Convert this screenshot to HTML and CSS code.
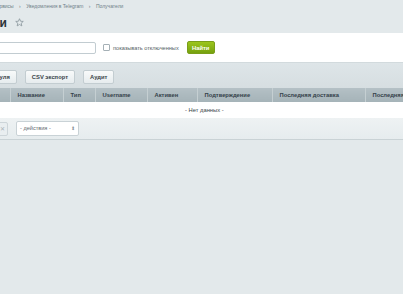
FILE: index.html
```html
<!DOCTYPE html>
<html lang="ru">
<head>
    <meta charset="UTF-8">
    <meta name="viewport" content="width=device-width, initial-scale=1.0">
    <title>Получатели</title>
    <link rel="stylesheet" href="styles.css">
</head>
<body>
    <div class="page">
        <div class="crumbs">
            <span class="crumb">Сервисы</span>
            <span class="sep">›</span>
            <span class="crumb">Уведомления в Telegram</span>
            <span class="sep">›</span>
            <span class="crumb">Получатели</span>
        </div>
        <div class="title-row">
            <h1>Получатели</h1>
            <svg class="star" viewBox="0 0 10 10" width="9" height="9">
                <path d="M5 0.8 L6.2 3.6 L9.2 3.8 L6.9 5.8 L7.6 8.8 L5 7.2 L2.4 8.8 L3.1 5.8 L0.8 3.8 L3.8 3.6 Z" fill="none" stroke="#8a969c" stroke-width="0.9" stroke-linejoin="round"/>
            </svg>
        </div>
        <div class="filter">
            <input class="search" type="text">
            <label class="check"><span class="box"></span>показывать отключенных</label>
            <button class="find">Найти</button>
        </div>
        <div class="toolbar">
            <button class="tbtn">Настройки модуля</button>
            <button class="tbtn">CSV экспорт</button>
            <button class="tbtn">Аудит</button>
        </div>
        <table class="grid">
            <thead>
                <tr>
                    <th class="c-check"></th>
                    <th class="c-id">ID</th>
                    <th class="c-name">Название</th>
                    <th class="c-type">Тип</th>
                    <th class="c-user">Username</th>
                    <th class="c-active">Активен</th>
                    <th class="c-conf">Подтверждение</th>
                    <th class="c-last">Последняя доставка</th>
                    <th class="c-last2">Последняя ошибка</th>
                </tr>
            </thead>
            <tbody>
                <tr>
                    <td class="empty" colspan="9">- Нет данных -</td>
                </tr>
            </tbody>
        </table>
        <div class="footer">
            <button class="del">✕</button>
            <div class="select">- действия -<span class="arrows">⬍</span></div>
        </div>
    </div>
</body>
</html>
```

FILE: styles.css
```css
body {
    margin: 0;
    background: #e3e9eb;
    font-family: "Liberation Sans", Arial, sans-serif;
    overflow: hidden;
}
.page {
    margin-left: -80px;
    width: 600px;
}
.crumbs {
    height: 12px;
    padding-left: 73px;
    font-size: 5px;
    line-height: 12px;
    color: #6f7f88;
    white-space: nowrap;
}
.sep {
    margin: 0 4px;
}
.title-row {
    height: 21px;
    display: flex;
    align-items: center;
    padding-left: 16px;
}
h1 {
    margin: 0;
    font-size: 12px;
    font-weight: bold;
    color: #2b3338;
}
.star {
    margin-left: 8px;
}
.filter {
    background: #fff;
    height: 29px;
    display: flex;
    align-items: center;
}
.search {
    width: 174px;
    height: 10px;
    margin: 1px 0 0 0;
    padding: 0;
    border: 1px solid #c2ccd1;
    border-radius: 2px;
    box-sizing: content-box;
}
.check {
    display: flex;
    align-items: center;
    margin-left: 7px;
    font-size: 5.6px;
    color: #555f66;
}
.box {
    width: 5px;
    height: 5px;
    border: 1px solid #a5b0b6;
    border-radius: 1px;
    margin-right: 3px;
}
.find {
    margin-left: 8px;
    width: 28px;
    height: 13px;
    padding: 0;
    border: 1px solid #7a9e1a;
    border-radius: 2px;
    background: linear-gradient(#9bc51c, #76a10f);
    color: #fff;
    font-family: inherit;
    font-size: 5.8px;
    font-weight: bold;
}
.toolbar {
    height: 26px;
    display: flex;
    align-items: center;
    gap: 8px;
    padding-left: 29px;
    background: linear-gradient(#dee5e8, #d6dee1);
    box-sizing: border-box;
    border-top: 1px solid #d2dadd;
}
.tbtn {
    height: 14px;
    padding: 0 6px;
    border: 1px solid #c3cdd1;
    border-radius: 2px;
    background: linear-gradient(#f8fafa, #e6ecee);
    color: #3a4449;
    font-family: inherit;
    font-size: 5.8px;
    font-weight: bold;
    margin-top: 2px;
}
.grid {
    border-collapse: collapse;
    width: 535px;
    table-layout: fixed;
}
.grid th {
    box-sizing: border-box;
    height: 14px;
    padding: 0 0 0 7px;
    text-align: left;
    font-size: 5.8px;
    font-weight: bold;
    color: #34414a;
    background: linear-gradient(#b4c0c5, #a5b3b8);
    border-left: 1px solid #c5cfd2;
    white-space: nowrap;
    overflow: hidden;
}
.grid th.c-check { width: 20px; border-left: none; }
.grid th.c-id { width: 70px; }
.c-name { width: 53px; }
.c-type { width: 32px; }
.c-user { width: 52px; }
.c-active { width: 50px; }
.c-conf { width: 75px; }
.c-last { width: 93px; }
.c-last2 { width: 90px; }
.empty {
    height: 16px;
    padding: 0 0 0 265px;
    background: #fff;
    text-align: left;
    font-size: 5.8px;
    color: #3a4449;
}
.footer {
    height: 21px;
    display: flex;
    align-items: center;
    background: linear-gradient(#eef2f3, #e6ecee);
    border-bottom: 1px solid #c9d2d5;
    padding-left: 68px;
}
.del {
    width: 20px;
    height: 14px;
    padding: 0 0 0 8px;
    border: 1px solid #cdd5d9;
    border-radius: 2px;
    background: #e9eef0;
    color: #a9b3b8;
    font-size: 6px;
}
.select {
    margin-left: 8px;
    width: 58px;
    height: 13px;
    padding: 0 0 0 3px;
    border: 1px solid #c9d2d6;
    border-radius: 2px;
    background: #fff;
    font-size: 5.6px;
    line-height: 13px;
    color: #5f6a70;
    display: flex;
    justify-content: space-between;
    box-sizing: content-box;
}
.arrows {
    margin-right: 3px;
    font-size: 5px;
    color: #8a959b;
}
```
